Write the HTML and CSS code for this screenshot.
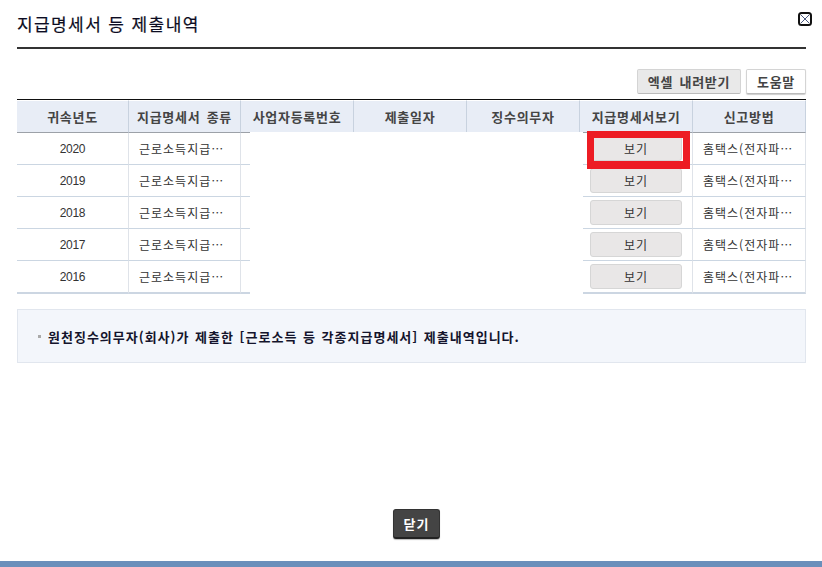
FILE: index.html
```html
<!DOCTYPE html>
<html lang="ko">
<head>
<meta charset="utf-8">
<title>지급명세서 등 제출내역</title>
<link rel="stylesheet" href="styles.css">
</head>
<body>
<div class="page">
  <main class="content">
    <header class="title-bar">
      <h1 class="title">지급명세서 등 제출내역</h1>
      <button class="x-btn" aria-label="닫기">
        <svg width="14" height="14" viewBox="0 0 14 14"><rect x="1" y="1" width="12" height="12" rx="2.5" fill="#fff" stroke="#111" stroke-width="2"/><path d="M3 3l8 8M11 3l-8 8" stroke="#4b5a80" stroke-width="1" fill="none"/></svg>
      </button>
    </header>
    <div class="toolbar">
      <button class="tool tool-gray">엑셀 내려받기</button>
      <button class="tool tool-white">도움말</button>
    </div>
    <div class="table-wrap">
      <table class="grid">
        <colgroup>
          <col class="c1"><col class="c2"><col class="c3"><col class="c3"><col class="c3"><col class="c3"><col class="c3">
        </colgroup>
        <thead>
          <tr><th>귀속년도</th><th>지급명세서 종류</th><th>사업자등록번호</th><th>제출일자</th><th>징수의무자</th><th>지급명세서보기</th><th>신고방법</th></tr>
        </thead>
        <tbody>
          <tr><td class="year">2020</td><td class="left">근로소득지급…</td><td></td><td></td><td></td><td class="mid"><button class="view">보기</button></td><td class="left">홈택스(전자파…</td></tr>
          <tr><td class="year">2019</td><td class="left">근로소득지급…</td><td></td><td></td><td></td><td class="mid"><button class="view">보기</button></td><td class="left">홈택스(전자파…</td></tr>
          <tr><td class="year">2018</td><td class="left">근로소득지급…</td><td></td><td></td><td></td><td class="mid"><button class="view">보기</button></td><td class="left">홈택스(전자파…</td></tr>
          <tr><td class="year">2017</td><td class="left">근로소득지급…</td><td></td><td></td><td></td><td class="mid"><button class="view">보기</button></td><td class="left">홈택스(전자파…</td></tr>
          <tr><td class="year">2016</td><td class="left">근로소득지급…</td><td></td><td></td><td></td><td class="mid"><button class="view">보기</button></td><td class="left">홈택스(전자파…</td></tr>
        </tbody>
      </table>
      <div class="mask"></div>
      <div class="highlight"></div>
    </div>
    <div class="notice">
      <span class="bullet"></span>
      <p class="notice-text">원천징수의무자(회사)가 제출한 [근로소득 등 각종지급명세서] 제출내역입니다.</p>
    </div>
    <div class="footer">
      <button class="close">닫기</button>
    </div>
  </main>
  <div class="bottom-bar"></div>
</div>
</body>
</html>
```
FILE: styles.css
```css
* { box-sizing: border-box; }
html, body { margin: 0; padding: 0; background: #fff; }
body { font-family: "Noto Sans CJK KR", "Liberation Sans", sans-serif; color: #222; overflow: hidden; }
button { font-family: inherit; margin: 0; padding: 0; cursor: pointer; }
.page { width: 822px; height: 567px; display: flex; flex-direction: column; }
.content { flex: 1; padding: 0 16px 0 17px; display: flex; flex-direction: column; }

.title-bar { height: 49px; border-bottom: 2px solid #333; display: flex; justify-content: space-between; align-items: flex-start; }
.title { margin: 11px 0 0; font-size: 17px; line-height: 26px; font-weight: 400; color: #0c0c22; letter-spacing: 1.4px; -webkit-text-stroke: 0.2px #0c0c22; }
.x-btn { width: 14px; height: 14px; border: 0; background: none; margin: 12px -6px 0 0; display: block; }
.x-btn svg { display: block; }

.toolbar { display: flex; justify-content: flex-end; gap: 5px; margin-top: 20px; height: 30px; }
.tool { height: 25px; font-size: 13px; font-weight: 700; color: #444; border: 1px solid #d4d4d4; border-bottom-color: #bbb; border-radius: 2px; letter-spacing: 0.7px; word-spacing: 2px; }
.tool-gray { width: 104px; background: #e9e9e9; }
.tool-white { width: 60px; background: #fff; box-shadow: 0 1px 1px #ccc; }

.table-wrap { position: relative; width: 789px; }
.grid { width: 789px; border-collapse: separate; border-spacing: 0; table-layout: fixed; border-top: 1px solid #111; }
.c1 { width: 112px; }
.c2 { width: 112px; }
.c3 { width: 113px; }
.grid th { height: 33px; border-top: 1px solid #fff; background: #e8edf6; background-clip: padding-box; border-right: 1px solid #c8d2df; border-bottom: 1px solid #9ca1a8; font-size: 13px; font-weight: 700; color: #444; padding: 0; letter-spacing: 0.7px; word-spacing: 2px; }
.grid td { height: 32px; border-right: 1px solid #dfe3e9; border-bottom: 1px solid #cbd6e2; font-size: 12px; text-align: center; padding: 0; color: #333; }
.grid td.year { font-family: "Liberation Sans", sans-serif; letter-spacing: -0.3px; }
.grid td.left { text-align: left; padding-left: 10px; white-space: nowrap; overflow: hidden; letter-spacing: 1px; }
.grid td.mid { padding: 0 0 0 10px; text-align: left; }
.grid tbody tr:last-child td { height: 33px; border-bottom: 2px solid #ccd6e2; }
.view { width: 92px; height: 25px; display: block; background: #e9e7e7; border: 1px solid #d6d6d6; border-radius: 3px; font-size: 12px; color: #333; letter-spacing: 1px; }

.mask { position: absolute; left: 233px; top: 33px; width: 333px; bottom: 0; background: #fff; }
.highlight { position: absolute; left: 570px; top: 32px; width: 103px; height: 38px; border: 7px solid #ed1c24; border-bottom-width: 8px; }

.notice { margin-top: 15px; height: 54px; background: #f3f6fb; border: 1px solid #e1e6ee; display: flex; align-items: center; padding-left: 20px; gap: 7px; }
.bullet { width: 3px; height: 3px; background: #aaa; }
.notice-text { margin: 0; font-size: 13px; font-weight: 700; color: #14142c; letter-spacing: 1px; word-spacing: 1px; }

.footer { margin-top: 146px; display: flex; justify-content: center; }
.close { width: 47px; height: 30px; margin-left: 10px; background: #444; border: 1px solid #333; border-bottom: 2px solid #222; border-radius: 3px; color: #fff; font-size: 13px; font-weight: 700; letter-spacing: 1px; box-shadow: 0 1px 1px #bbb; }

.bottom-bar { height: 6px; background: #6a8fbb; }
```
